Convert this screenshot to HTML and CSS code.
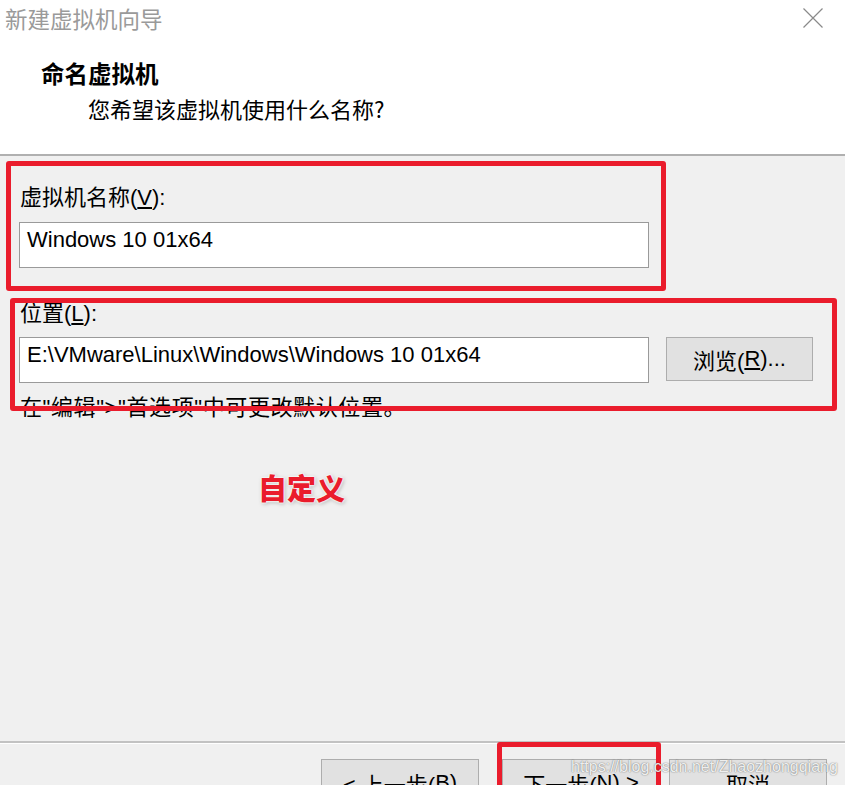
FILE: index.html
```html
<!DOCTYPE html>
<html lang="zh-CN">
<head>
<meta charset="utf-8">
<title>新建虚拟机向导</title>
<link rel="stylesheet" href="styles.css">
</head>
<body>
<div class="window">
  <div class="titlebar">
    <span class="title">新建虚拟机向导</span>
    <svg class="close" width="20" height="20" viewBox="0 0 20 20"><path d="M0.5 0.5 L19.5 19.5 M19.5 0.5 L0.5 19.5" stroke="#8a8a8a" stroke-width="1.2" fill="none"/></svg>
  </div>
  <div class="header">
    <div class="heading">命名虚拟机</div>
    <div class="subtitle">您希望该虚拟机使用什么名称?</div>
  </div>
  <div class="sep"></div>
  <div class="content">
    <div class="label label-name">虚拟机名称(<u>V</u>):</div>
    <div class="input">Windows 10 01x64</div>
    <div class="label label-loc">位置(<u>L</u>):</div>
    <div class="row">
      <div class="input">E:\VMware\Linux\Windows\Windows 10 01x64</div>
      <div class="btn browse">浏览(<u>R</u>)...</div>
    </div>
    <div class="hint">在"编辑"&gt;"首选项"中可更改默认位置。</div>
    <div class="note">自定义</div>
  </div>
  <div class="footer">
    <div class="footer-sep"></div>
    <div class="buttons">
      <div class="btn back">&lt; 上一步(<u>B</u>)</div>
      <div class="btn next">下一步(<u>N</u>) &gt;</div>
      <div class="btn cancel">取消</div>
    </div>
  </div>
  <div class="mark mark-name"></div>
  <div class="mark mark-loc"></div>
  <div class="mark mark-next"></div>
  <div class="watermark">https://blog.csdn.net/Zhaozhongqiang</div>
</div>
</body>
</html>
```
FILE: styles.css
```css
* { box-sizing: border-box; }
html, body { margin: 0; padding: 0; background: #f0f0f0; }
body { font-family: "Liberation Sans", "Noto Sans CJK SC", sans-serif; color: #000; }
.window {
  position: relative;
  width: 845px;
  height: 785px;
  overflow: hidden;
  display: flex;
  flex-direction: column;
  background: #f0f0f0;
}
.titlebar {
  height: 38px;
  flex: 0 0 38px;
  background: #fff;
  display: flex;
  align-items: flex-start;
  justify-content: space-between;
  padding-left: 5px;
  padding-right: 22px;
}
.title {
  font-family: "Noto Sans CJK SC", sans-serif;
  font-size: 22.5px;
  line-height: 36px;
  color: #9a9a9a;
}
.close { margin-top: 8px; }
.header {
  background: #fff;
  flex: 0 0 116px;
  padding-top: 20px;
}
.heading {
  font-family: "Noto Sans CJK SC", sans-serif;
  font-weight: 700;
  font-size: 23.5px;
  line-height: 30px;
  padding-left: 41px;
}
.subtitle {
  font-family: "Noto Sans CJK SC", sans-serif;
  font-size: 22px;
  line-height: 30px;
  padding-left: 88px;
  margin-top: 5px;
}
.sep { flex: 0 0 2px; background: #b0b0b0; }
.content {
  flex: 1 1 auto;
  padding-left: 19px;
  display: flex;
  flex-direction: column;
  align-items: flex-start;
}
.label, .hint {
  font-size: 22px;
  line-height: 28px;
  padding-left: 1px;
}
.hint { letter-spacing: 0.6px; margin-top: 11px; }
.label-name { margin-top: 28px; }
.label-loc { margin-top: 32px; }
.input {
  width: 630px;
  height: 46px;
  background: #fff;
  border: 1px solid #9a9a9a;
  padding: 3px 0 0 7px;
  font-size: 22px;
  line-height: 28px;
  white-space: nowrap;
}
.label-name + .input { margin-top: 10px; }
.row {
  display: flex;
  align-items: flex-start;
  gap: 17px;
  margin-top: 9px;
}
.btn {
  background: #e1e1e1;
  border: 1px solid #adadad;
  display: flex;
  align-items: center;
  justify-content: center;
  font-size: 22px;
  white-space: nowrap;
}
.browse { width: 147px; height: 44px; }
.note {
  margin-top: 47px;
  margin-left: 239px;
  font-family: "Noto Sans CJK SC", sans-serif;
  font-weight: 900;
  font-size: 29px;
  line-height: 36px;
  color: #ea1c2c;
  text-shadow: 0 0 2px #fff, 0 0 2px #fff, 0 0 3px #fff, 1px 1px 4px rgba(0,0,0,0.35);
}
.footer {
  flex: 0 0 44px;
  overflow: hidden;
}
.footer-sep {
  height: 3px;
  background: #c2c2c2;
  border-bottom: 1px solid #fff;
}
.buttons {
  display: flex;
  justify-content: flex-end;
  padding-right: 18px;
  margin-top: 15px;
}
.buttons .btn { width: 158px; height: 48px; }
.back { margin-right: 23px; }
.next { margin-right: 9px; }
.mark {
  position: absolute;
  border: 5px solid #ea1c2c;
  border-radius: 3px;
}
.mark-name { left: 6px; top: 161px; width: 660px; height: 130px; }
.mark-loc { left: 10px; top: 298px; width: 827px; height: 113px; }
.mark-next { left: 497px; top: 742px; width: 164px; height: 60px; }
.watermark {
  position: absolute;
  left: 571px;
  top: 756px;
  font-family: "Liberation Sans", sans-serif;
  font-size: 16px;
  line-height: 22px;
  color: rgba(255,255,255,0.9);
  text-shadow: 0 0 1px rgba(0,0,0,0.45), 0 0 2px rgba(0,0,0,0.25);
}
```
